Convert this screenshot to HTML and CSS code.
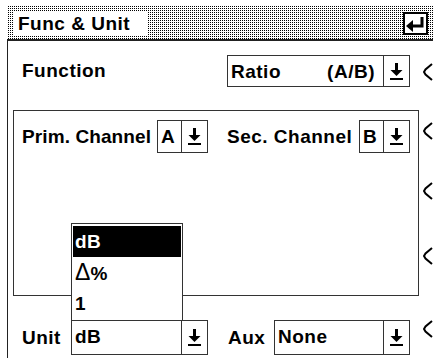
FILE: index.html
```html
<!DOCTYPE html>
<html lang="en">
<head>
    <meta charset="UTF-8">
    <meta name="viewport" content="width=device-width, initial-scale=1.0">
    <title>Func &amp; Unit</title>
    <link rel="stylesheet" href="styles.css">
</head>
<body>

<div class="screen">
    <div class="titlebar">
        <div class="title">Func &amp; Unit</div>
        <div class="enter">
            <svg width="21" height="18" viewBox="0 0 21 18">
                <path d="M17 2 V11 H6" fill="none" stroke="#000" stroke-width="3"/>
                <polygon points="1,11 8,5 8,17" fill="#000"/>
            </svg>
        </div>
    </div>

    <div class="panel">
        <div class="main">
            <div class="row row-func">
                <div class="half">
                    <span class="label">Function</span>
                </div>
                <div class="half">
                    <div class="select wide">
                        <div class="value split"><span>Ratio</span><span>(A/B)</span></div>
                        <div class="drop"><svg width="13" height="17" viewBox="0 0 13 17"><rect x="5" y="0" width="3" height="8"/><polygon points="0.5,7 12.5,7 6.5,13"/><rect x="0" y="15" width="13" height="2"/></svg></div>
                    </div>
                </div>
            </div>

            <div class="group">
                <div class="row">
                    <div class="half">
                        <span class="label tight">Prim. Channel</span>
                        <div class="select small">
                            <div class="value">A</div>
                            <div class="drop"><svg width="13" height="17" viewBox="0 0 13 17"><rect x="5" y="0" width="3" height="8"/><polygon points="0.5,7 12.5,7 6.5,13"/><rect x="0" y="15" width="13" height="2"/></svg></div>
                        </div>
                    </div>
                    <div class="half">
                        <span class="label">Sec. Channel</span>
                        <div class="select small">
                            <div class="value">B</div>
                            <div class="drop"><svg width="13" height="17" viewBox="0 0 13 17"><rect x="5" y="0" width="3" height="8"/><polygon points="0.5,7 12.5,7 6.5,13"/><rect x="0" y="15" width="13" height="2"/></svg></div>
                        </div>
                    </div>
                </div>
            </div>

            <div class="row row-unit">
                <div class="half">
                    <span class="label">Unit</span>
                    <div class="select unit">
                        <div class="value">dB</div>
                        <div class="drop"><svg width="13" height="17" viewBox="0 0 13 17"><rect x="5" y="0" width="3" height="8"/><polygon points="0.5,7 12.5,7 6.5,13"/><rect x="0" y="15" width="13" height="2"/></svg></div>
                        <ul class="popup">
                            <li class="selected">dB</li>
                            <li><span class="delta">Δ</span>%</li>
                            <li>1</li>
                        </ul>
                    </div>
                </div>
                <div class="half">
                    <span class="label">Aux</span>
                    <div class="select aux">
                        <div class="value">None</div>
                        <div class="drop"><svg width="13" height="17" viewBox="0 0 13 17"><rect x="5" y="0" width="3" height="8"/><polygon points="0.5,7 12.5,7 6.5,13"/><rect x="0" y="15" width="13" height="2"/></svg></div>
                    </div>
                </div>
            </div>
        </div>

        <div class="keys">
            <svg class="key" width="10" height="18" viewBox="0 0 10 18"><polyline points="9,1 2.5,6.5 1,9 2.5,11.5 9,17" fill="none" stroke="#000" stroke-width="2"/></svg>
            <svg class="key" width="10" height="18" viewBox="0 0 10 18"><polyline points="9,1 2.5,6.5 1,9 2.5,11.5 9,17" fill="none" stroke="#000" stroke-width="2"/></svg>
            <svg class="key" width="10" height="18" viewBox="0 0 10 18"><polyline points="9,1 2.5,6.5 1,9 2.5,11.5 9,17" fill="none" stroke="#000" stroke-width="2"/></svg>
            <svg class="key" width="10" height="18" viewBox="0 0 10 18"><polyline points="9,1 2.5,6.5 1,9 2.5,11.5 9,17" fill="none" stroke="#000" stroke-width="2"/></svg>
            <svg class="key" width="10" height="18" viewBox="0 0 10 18"><polyline points="9,1 2.5,6.5 1,9 2.5,11.5 9,17" fill="none" stroke="#000" stroke-width="2"/></svg>
        </div>
    </div>
</div>

</body>
</html>
```

FILE: styles.css
```css
* { box-sizing: border-box; }
html, body { margin: 0; padding: 0; background: #fff; overflow: hidden; }
body { font-family: "Liberation Sans", Arial, sans-serif; font-weight: bold; font-size: 19px; letter-spacing: 0.5px; color: #000; }

.screen { width: 433px; height: 358px; padding: 6px 0 0 7px; }

.titlebar { height: 35px; display: flex; align-items: center; justify-content: space-between; padding: 0 5px 0 6px; border-bottom: 2px solid #222; background: conic-gradient(#000 25%, #fff 0) 0 0 / 2px 2px; }
.title { background: #fff; height: 25px; width: 135px; padding: 1px 0 0 5px; line-height: 23px; margin-top: 1px; }
.enter { width: 25px; height: 23px; background: #fff; border: 2px solid #000; display: flex; align-items: center; justify-content: center; margin-top: 2px; }
.enter svg { display: block; }

.panel { display: grid; grid-template-columns: 406px 1fr; column-gap: 4px; border-left: 1px solid #222; padding-left: 5px; height: 317px; }

.row { display: grid; grid-template-columns: 186px 183px; column-gap: 19px; align-items: center; }
.half { display: flex; align-items: center; justify-content: space-between; }
.label.tight { letter-spacing: 0.1px; }
.row-func { margin: 14px 9px 0 9px; }
.row-unit { margin: 24px 9px 0 9px; }
.row-unit .half:last-child { padding-left: 1px; }

.group { margin-top: 23px; border: 1px solid #333; height: 186px; padding: 9px 8px 0 8px; }

.select { position: relative; display: flex; height: 33px; border: 1px solid #333; background: #fff; }
.select .value { flex: 1; padding: 0 3px; line-height: 31px; }
.select .split { display: flex; justify-content: space-between; padding-right: 8px; }
.select .drop { width: 26px; border-left: 1px solid #333; display: flex; align-items: center; justify-content: center; }
.select .drop svg { display: block; }
.select.wide { width: 183px; height: 32px; }
.select.small { width: 51px; }
.select.small .value { padding-left: 3px; }
.select.unit { width: 137px; height: 35px; }
.select.aux { width: 136px; height: 35px; }

.popup { position: absolute; left: -1px; bottom: 100%; width: 112px; height: 98px; margin: 0; padding: 2px 1px 0 1px; list-style: none; border: 1px solid #333; background: #fff; }
.popup li { height: 31px; line-height: 31px; padding-left: 2px; }
.popup li.selected { background: #000; color: #fff; }
.popup .delta { font-weight: normal; font-size: 23px; letter-spacing: 0; }

.keys { display: flex; flex-direction: column; }
.key { display: block; }
.key:nth-child(1) { margin-top: 22px; }
.key:nth-child(2) { margin-top: 41px; }
.key:nth-child(3) { margin-top: 42px; }
.key:nth-child(4) { margin-top: 47px; }
.key:nth-child(5) { margin-top: 55px; }
```
